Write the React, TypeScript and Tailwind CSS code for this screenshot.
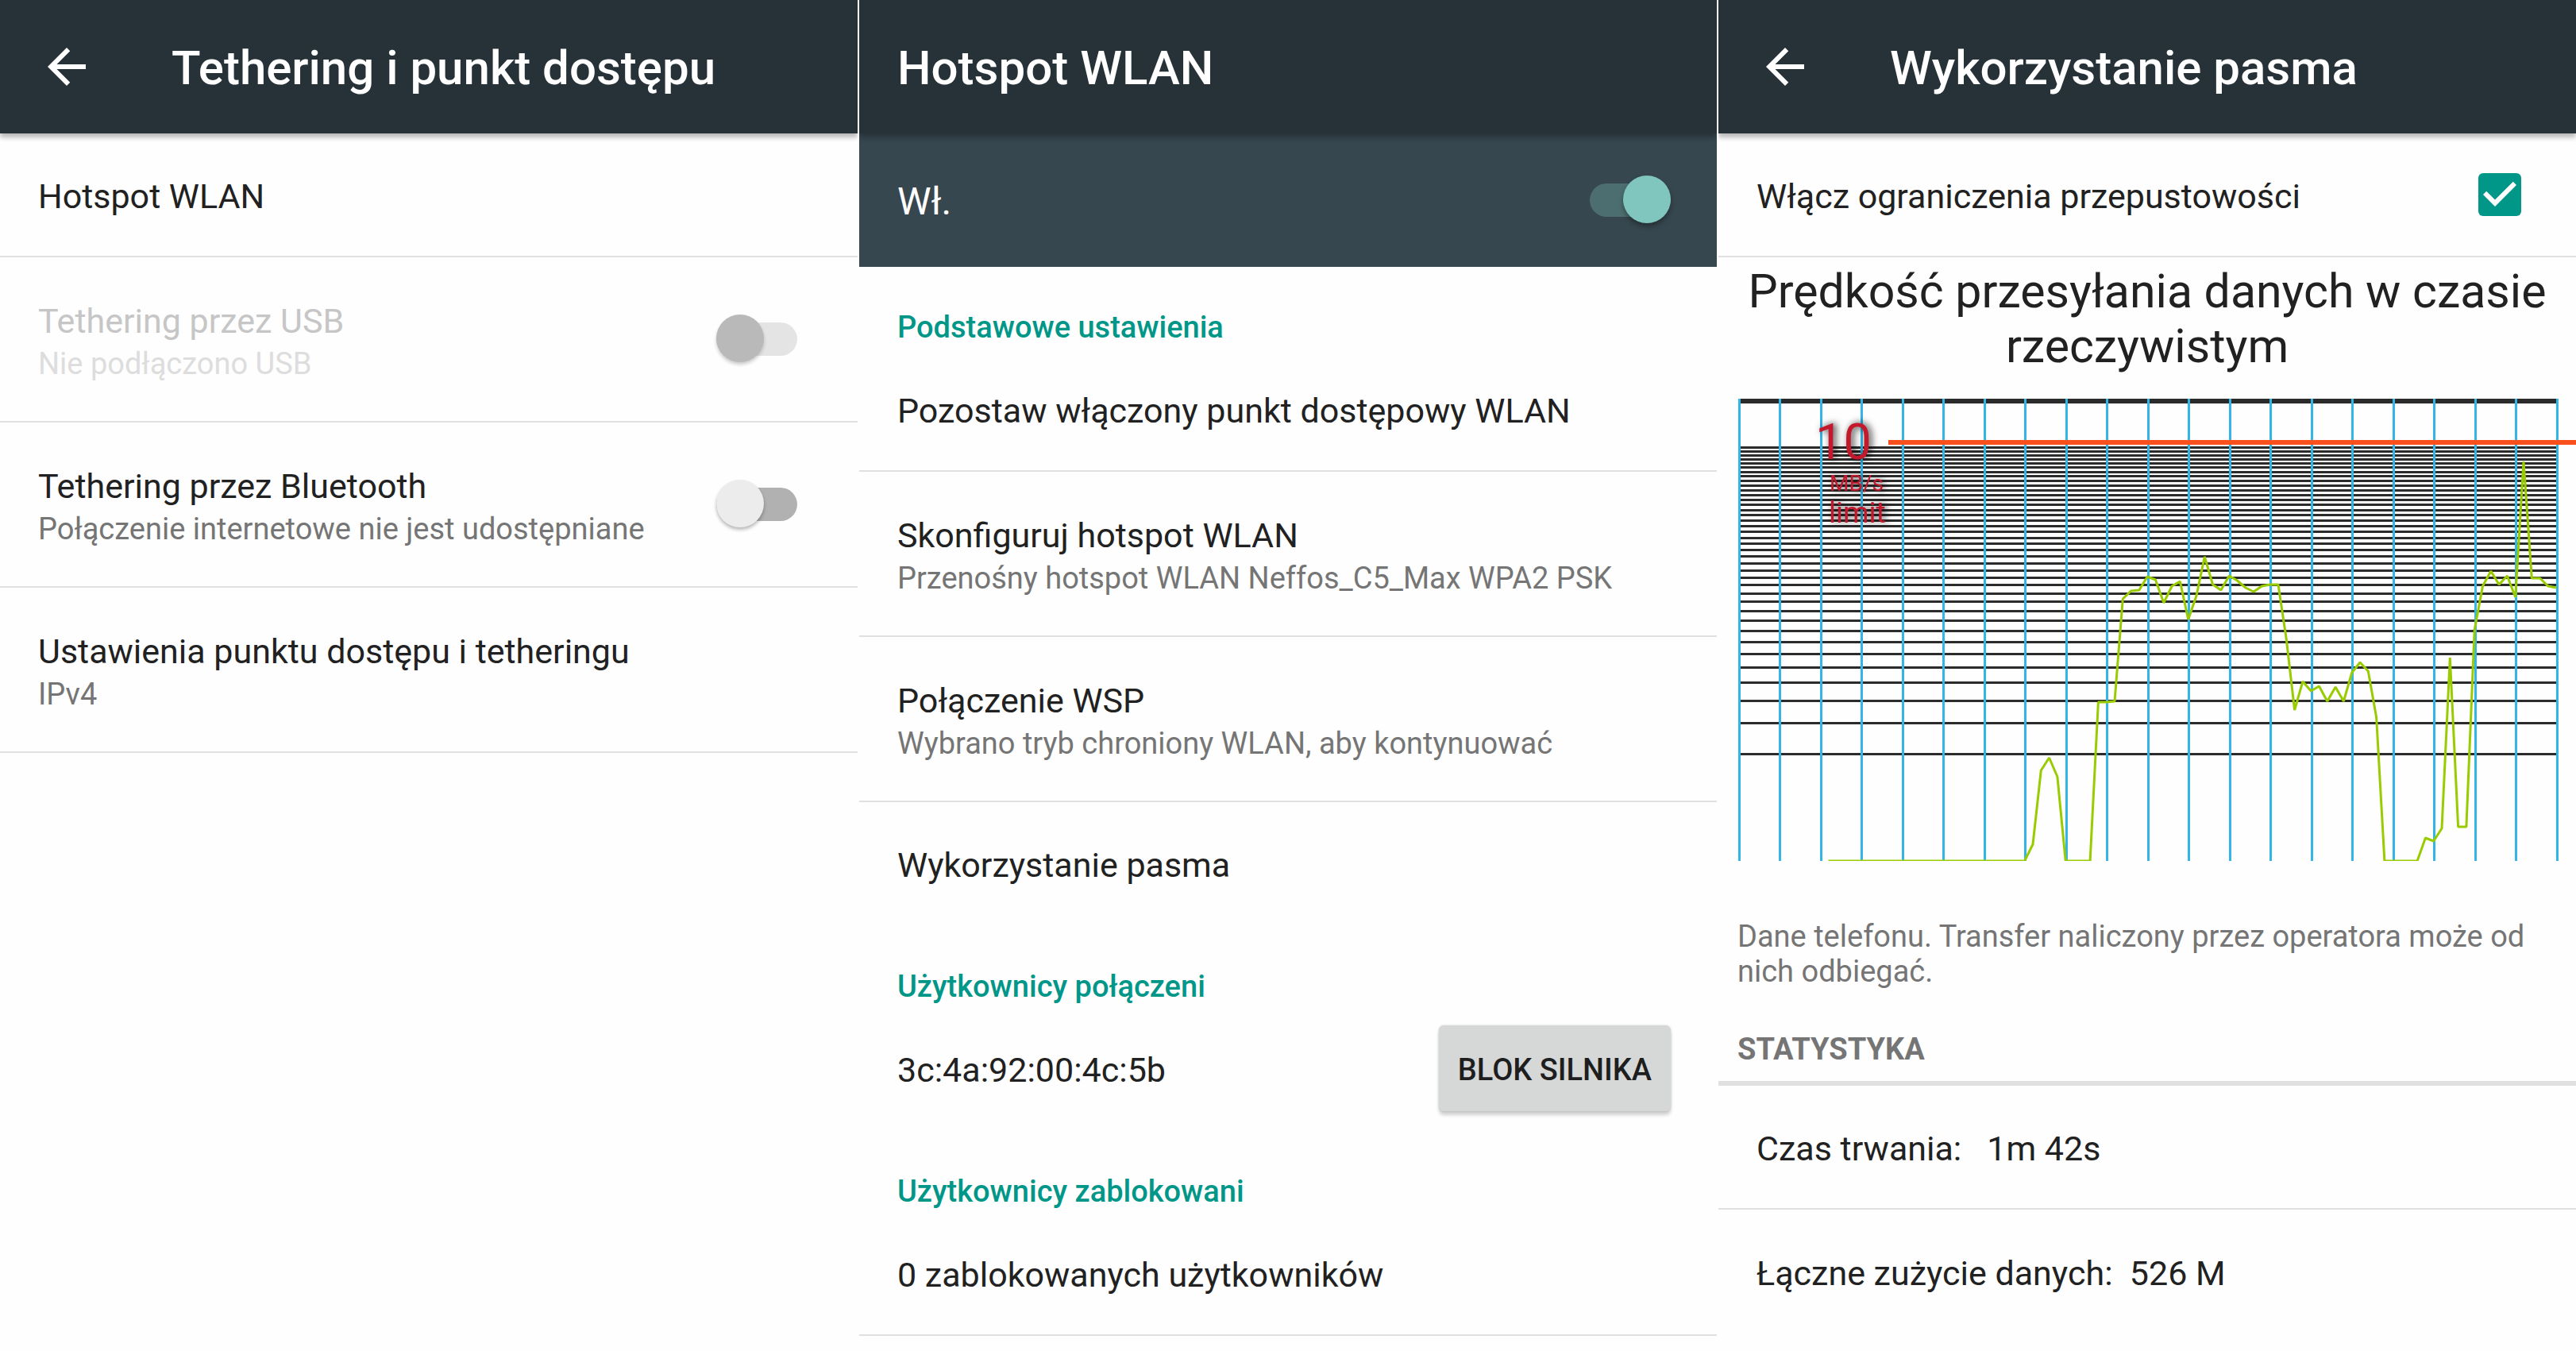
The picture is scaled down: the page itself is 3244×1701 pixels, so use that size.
import type { ReactNode } from "react";

const GRID_ROWS = [
  60, 65, 70, 75, 80, 85, 91, 96, 102, 108, 114, 120, 126, 132, 139, 145, 152, 159, 166, 174, 181, 189, 197, 206, 215,
  224, 233, 244, 254, 266, 278, 291, 305, 320, 337, 356, 379, 407, 446,
];

const GRID_COLUMNS = Array.from({ length: 21 }, (_, i) => 25 + Math.floor(i * 51.5));

const TRANSFER = [
  ...Array.from({ length: 25 }, () => 582),
  561, 468, 452, 476, 582, 582, 582, 582, 382, 382, 381, 252, 242, 241, 224, 228, 257, 236, 230, 278, 248, 199, 234,
  241, 223, 229, 238, 243, 236, 234, 234, 303, 392, 356, 368, 362, 381, 363, 381, 345, 332, 343, 401, 582, 582, 582,
  582, 582, 553, 557, 541, 326, 539, 539, 291, 236, 217, 234, 223, 250, 79, 226, 226, 236, 238,
];

const TRANSFER_POINTS = TRANSFER.map((y, i) => `${(138.5 + i * 10.3).toFixed(1)},${y}`).join(" ");

function Screen({ children }: { children: ReactNode }) {
  return <section className="flex min-w-0 flex-col overflow-hidden bg-[#fefefe]">{children}</section>;
}

function AppBar({ title, back = false }: { title: string; back?: boolean }) {
  return (
    <header className="relative z-10 flex h-[168px] shrink-0 items-center gap-24 bg-[#263238] pl-12 text-white shadow-[0_5px_6px_rgba(0,0,0,0.28)]">
      {back && (
        <button type="button" aria-label="Wstecz" className="shrink-0">
          <svg viewBox="0 0 24 24" className="size-[72px]" fill="currentColor" aria-hidden="true">
            <path d="M20 11H7.83l5.59-5.59L12 4l-8 8 8 8 1.41-1.41L7.83 13H20v-2z" />
          </svg>
        </button>
      )}
      <h1 className="truncate pt-1 text-[60px] leading-[72px] font-medium">{title}</h1>
    </header>
  );
}

function RowText({ title, summary, disabled = false }: { title: string; summary?: string; disabled?: boolean }) {
  return (
    <span className="block pt-1">
      <span className={`block text-[43px] leading-[58px] whitespace-pre ${disabled ? "text-[#c6c6c6]" : "text-[#212121]"}`}>
        {title}
      </span>
      {summary && (
        <span className={`block text-[38px] leading-[51px] ${disabled ? "text-[#dddddd]" : "text-[#757575]"}`}>
          {summary}
        </span>
      )}
    </span>
  );
}

function LinkRow({ title, summary, divider = true }: { title: string; summary?: string; divider?: boolean }) {
  return (
    <button
      type="button"
      className={`flex w-full shrink-0 items-center border-b-2 pl-12 text-left ${summary ? "h-[208px]" : "h-[156px]"} ${
        divider ? "border-[#e0e0e0]" : "border-transparent"
      }`}
    >
      <RowText title={title} summary={summary} />
    </button>
  );
}

function Switch({ id, on = false, disabled = false }: { id: string; on?: boolean; disabled?: boolean }) {
  const tone = on
    ? "bg-[#4d6e70] before:right-0 before:bg-[#80c6bf] before:shadow-[0_4px_6px_rgba(0,0,0,0.35)]"
    : disabled
      ? "bg-[#e4e4e4] before:left-0 before:bg-[#b9b9b9] before:shadow-[0_3px_4px_rgba(0,0,0,0.2)]"
      : "bg-[#b1b1b1] before:left-0 before:bg-[#ececec] before:shadow-[0_3px_4px_rgba(0,0,0,0.28)]";
  return (
    <input
      id={id}
      type="checkbox"
      role="switch"
      defaultChecked={on}
      disabled={disabled}
      className={`relative h-[42px] w-[102px] shrink-0 appearance-none rounded-full before:absolute before:-top-[10px] before:size-[60px] before:rounded-full before:content-[''] ${tone}`}
    />
  );
}

function SwitchRow({ id, title, summary, disabled }: { id: string; title: string; summary: string; disabled?: boolean }) {
  return (
    <div className="flex h-[208px] shrink-0 items-center justify-between border-b-2 border-[#e0e0e0] pr-[76px] pl-12">
      <label htmlFor={id}>
        <RowText title={title} summary={summary} disabled={disabled} />
      </label>
      <Switch id={id} disabled={disabled} />
    </div>
  );
}

function Category({ children }: { children: ReactNode }) {
  return (
    <h2 className="flex h-[102px] shrink-0 items-end pb-[3px] pl-12 text-[38px] leading-[45px] font-medium text-[#009688]">
      {children}
    </h2>
  );
}

function SpeedChart() {
  return (
    <svg viewBox="0 0 1080 582" className="mt-8 block w-full shrink-0" role="img" aria-label="Wykres prędkości przesyłania danych">
      <g fill="#2b2b2b">
        <rect x="25" y="0" width="1033" height="6" />
        {GRID_ROWS.map((y) => (
          <rect key={y} x="25" y={y} width="1033" height="3" />
        ))}
      </g>
      <g fill="#33b5e5">
        {GRID_COLUMNS.map((x) => (
          <rect key={x} x={x} y="0" width="3" height="582" />
        ))}
      </g>
      <polyline points={TRANSFER_POINTS} fill="none" stroke="#99cc00" strokeWidth="3" strokeLinejoin="bevel" />
      <rect x="214" y="52" width="866" height="6" fill="#f9501d" />
      <g fill="#c4182d" className="drop-shadow-[3px_0_5px_rgba(0,0,0,0.85)]">
        <text x="122" y="76" fontSize="63">10</text>
        <text x="140" y="116" fontSize="28">MB/s</text>
        <text x="139" y="156" fontSize="37">limit</text>
      </g>
    </svg>
  );
}

export default function App() {
  return (
    <main className="grid min-h-screen grid-cols-3 gap-[2px] bg-[#fefefe] font-[Roboto,sans-serif]">
      <Screen>
        <AppBar title="Tethering i punkt dostępu" back />
        <LinkRow title="Hotspot WLAN" />
        <SwitchRow id="usb" title="Tethering przez USB" summary="Nie podłączono USB" disabled />
        <SwitchRow id="bluetooth" title="Tethering przez Bluetooth" summary="Połączenie internetowe nie jest udostępniane" />
        <LinkRow title="Ustawienia punktu dostępu i tetheringu" summary="IPv4" />
      </Screen>

      <Screen>
        <AppBar title="Hotspot WLAN" />
        <div className="flex h-[168px] shrink-0 items-center justify-between bg-[#37474f] pr-[58px] pl-12">
          <label htmlFor="hotspot" className="pt-1 text-[48px] leading-[58px] text-white">
            Wł.
          </label>
          <Switch id="hotspot" on />
        </div>
        <Category>Podstawowe ustawienia</Category>
        <LinkRow title="Pozostaw włączony punkt dostępowy WLAN" />
        <LinkRow title="Skonfiguruj hotspot WLAN" summary="Przenośny hotspot WLAN Neffos_C5_Max WPA2 PSK" />
        <LinkRow title="Połączenie WSP" summary="Wybrano tryb chroniony WLAN, aby kontynuować" />
        <LinkRow title="Wykorzystanie pasma" divider={false} />
        <Category>Użytkownicy połączeni</Category>
        <div className="flex h-[156px] shrink-0 items-center justify-between border-b-2 border-transparent pr-[58px] pl-12">
          <RowText title="3c:4a:92:00:4c:5b" />
          <button
            type="button"
            className="h-[108px] rounded-md bg-[#d6d8d7] px-6 pt-1 text-[38px] leading-[45px] font-medium text-[#1e1e1e] shadow-[0_5px_4px_rgba(0,0,0,0.18),0_0_3px_rgba(0,0,0,0.15)]"
          >
            BLOK SILNIKA
          </button>
        </div>
        <Category>Użytkownicy zablokowani</Category>
        <LinkRow title="0 zablokowanych użytkowników" />
      </Screen>

      <Screen>
        <AppBar title="Wykorzystanie pasma" back />
        <div className="flex h-[156px] shrink-0 items-center justify-between border-b-2 border-[#e0e0e0] pr-[69px] pl-12">
          <label htmlFor="limits">
            <RowText title="Włącz ograniczenia przepustowości" />
          </label>
          <span className="grid shrink-0">
            <input
              id="limits"
              type="checkbox"
              defaultChecked
              className="col-start-1 row-start-1 size-[54px] appearance-none rounded-md bg-[#009688]"
            />
            <svg viewBox="3 3 18 18" className="pointer-events-none col-start-1 row-start-1 size-[54px]" fill="#fefefe" aria-hidden="true">
              <path d="M10 17l-5-5 1.41-1.41L10 14.17l7.59-7.59L19 8l-9 9z" />
            </svg>
          </span>
        </div>
        <h2 className="px-6 pt-2 text-center text-[59px] leading-[69px] text-[#212121]">
          Prędkość przesyłania danych w czasie rzeczywistym
        </h2>
        <SpeedChart />
        <p className="mt-[73px] px-6 text-[38px] leading-[44px] text-[#757575]">
          Dane telefonu. Transfer naliczony przez operatora może od nich odbiegać.
        </p>
        <h2 className="mt-[54px] border-b-6 border-[#e0e0e0] px-6 pb-[18px] text-[38px] leading-[44px] font-bold text-[#757575]">
          STATYSTYKA
        </h2>
        <div className="flex h-[156px] shrink-0 items-center border-b-2 border-[#e0e0e0] pl-12">
          <RowText title="Czas trwania:   1m 42s" />
        </div>
        <div className="flex h-[156px] shrink-0 items-center pl-12">
          <RowText title="Łączne zużycie danych:  526 M" />
        </div>
      </Screen>
    </main>
  );
}
